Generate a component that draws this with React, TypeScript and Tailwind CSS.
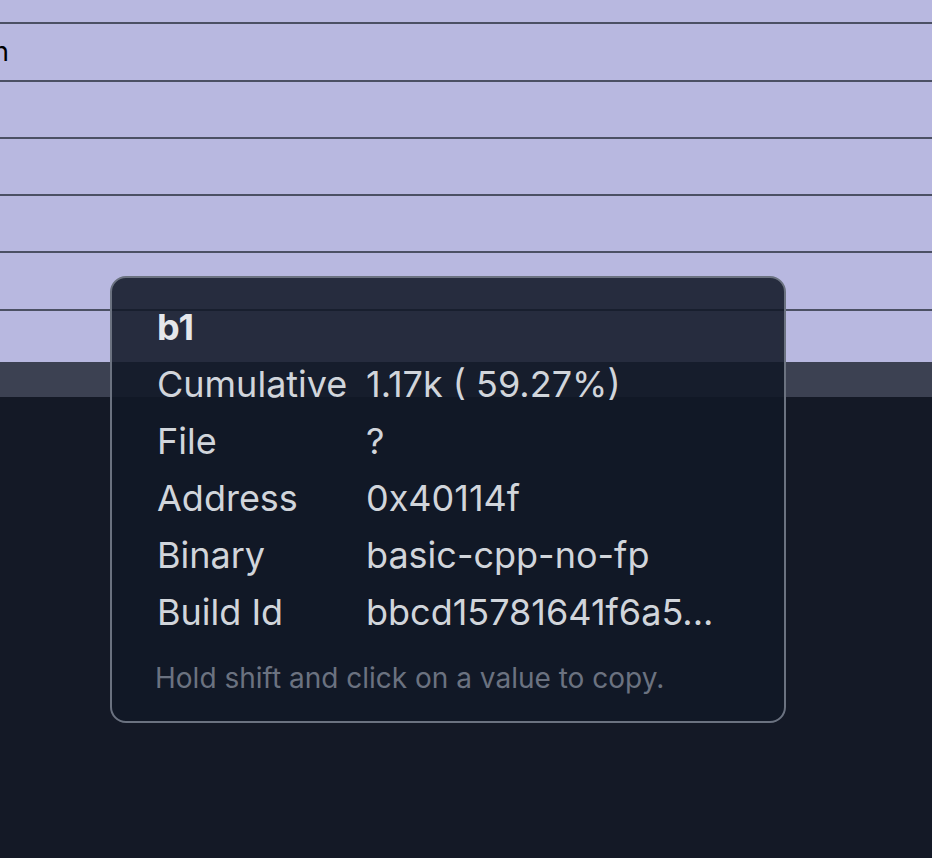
import React from 'react';

const rows = [
  { label: 'Cumulative', value: '1.17k ( 59.27%)' },
  { label: 'File', value: '?' },
  { label: 'Address', value: '0x40114f' },
  { label: 'Binary', value: 'basic-cpp-no-fp' },
  { label: 'Build Id', value: 'bbcd15781641f6a5...' },
];

function GraphRow({ text, tall }: { text?: string; tall?: boolean }) {
  return (
    <div
      className={`${tall ? 'h-[58px]' : 'h-[57px]'} border-b-2 border-[#4b5064] flex items-center`}
    >
      {text && (
        <div className="w-[9px] flex justify-end whitespace-nowrap text-[27px] text-black">
          {text}
        </div>
      )}
    </div>
  );
}

export default function App() {
  return (
    <div
      className="relative w-[932px] h-[858px] overflow-hidden bg-[#141926]"
      style={{ fontFamily: 'Inter, "Noto Sans", sans-serif' }}
    >
      {/* Flame graph rows */}
      <div className="bg-[#b8b8e0]">
        <div className="h-[24px] border-b-2 border-[#4b5064]" />
        <GraphRow text="main" tall />
        <GraphRow />
        <GraphRow />
        <GraphRow />
        <GraphRow tall />
        <div className="h-[51px]" />
      </div>
      <div className="h-[35px] bg-[#3c4152]" />

      {/* Tooltip */}
      <div className="absolute left-[110px] top-[276px] w-[676px] h-[447px] rounded-[16px] border-2 border-[#6b7280] bg-[#111827]/[0.88] pl-[45px] pt-[21px]">
        <div className="text-[36px] leading-[57px] font-bold text-[#e5e7eb]">b1</div>
        {rows.map((r) => (
          <div key={r.label} className="flex text-[36px] leading-[57px] text-[#d1d5db]">
            <div className="w-[209px] shrink-0 whitespace-nowrap">{r.label}</div>
            <div className="whitespace-nowrap">{r.value}</div>
          </div>
        ))}
        <div className="mt-[17px] -ml-[2px] text-[28px] leading-[40px] text-[#6b7280]">
          Hold shift and click on a value to copy.
        </div>
      </div>
    </div>
  );
}
